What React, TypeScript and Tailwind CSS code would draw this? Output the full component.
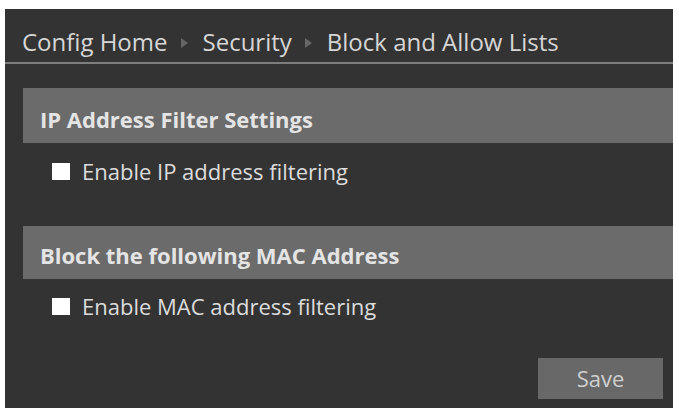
import React from "react";

function Arrow() {
  return (
    <svg width="7" height="10" viewBox="0 0 7 10" className="ml-[13px] mr-[15px] mt-[2px]">
      <path d="M0 0 L7 5 L0 10 Z" fill="#666666" />
    </svg>
  );
}

function SectionHeader({ title, className }: { title: string; className: string }) {
  return (
    <div className={`flex items-center bg-[#6b6b6b] pl-[17px] text-[22px] font-bold text-[#e4e4e4] ${className}`}>
      {title}
    </div>
  );
}

function CheckRow({ label }: { label: string }) {
  return (
    <label className="flex items-center gap-[12px] pl-[29px] text-[22px] text-[#dcdcdc]">
      <span className="block h-[17px] w-[18px] bg-white" />
      {label}
    </label>
  );
}

export default function App() {
  return (
    <div
      className="h-[412px] w-[679px] bg-white pl-[5px] pr-[6px] pt-[9px]"
      style={{ fontFamily: '"Open Sans", "Noto Sans", sans-serif' }}
    >
      <div className="flex h-[399px] flex-col bg-[#333333]">
        {/* Breadcrumb */}
        <div className="flex h-[55px] items-center border-b-2 border-[#7d7d7d] pl-[17px] pt-[12px] text-[24px] text-[#d6d6d6]">
          <span>Config Home</span>
          <Arrow />
          <span>Security</span>
          <Arrow />
          <span>Block and Allow Lists</span>
        </div>

        <div className="flex flex-1 flex-col pl-[18px]">
          <SectionHeader title="IP Address Filter Settings" className="mt-[24px] h-[55px] pt-[7px]" />
          <div className="h-[83px] pt-[12px]">
            <CheckRow label="Enable IP address filtering" />
          </div>
          <SectionHeader title="Block the following MAC Address" className="h-[53px] pt-[5px]" />
          <div className="pt-[11px]">
            <CheckRow label="Enable MAC address filtering" />
          </div>
          <div className="mt-auto mb-[9px] mr-[10px] flex justify-end">
            <button className="h-[41px] w-[125px] bg-[#686868] text-[22px] text-[#cfcfcf]">Save</button>
          </div>
        </div>
      </div>
    </div>
  );
}
